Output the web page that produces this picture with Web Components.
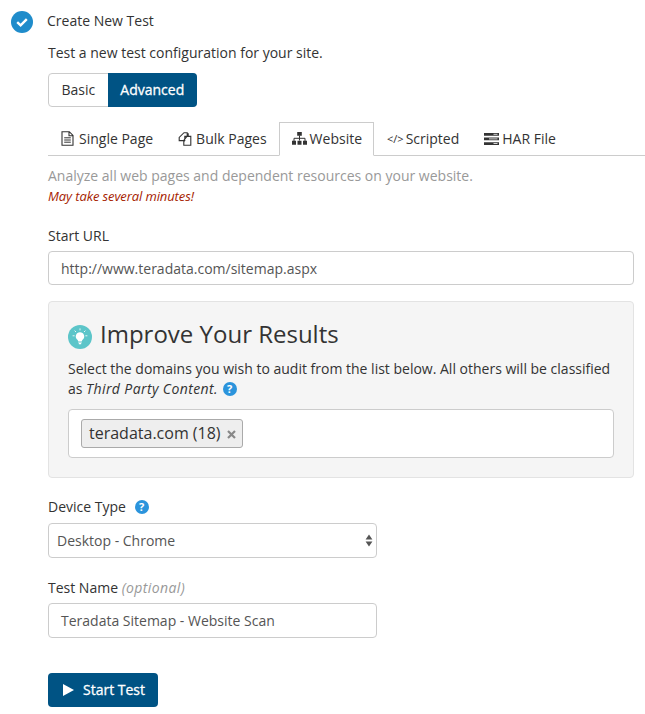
<!DOCTYPE html>
<html>
<head>
<meta charset="utf-8">
<title>Create New Test</title>
<style>
html, body { margin: 0; padding: 0; background: #fff; }
body { font-family: "Open Sans", sans-serif; font-size: 14px; color: #333; }
</style>
</head>
<body>
<test-form></test-form>

<script>
const ICONS = {
    check: '<svg width="22" height="22" viewBox="0 0 22 22"><circle cx="11" cy="11" r="11" fill="#1f8ccb"/><path d="M6.2 11.2l3.4 3.2 6.200-6.200" fill="none" stroke="#fff" stroke-width="2.400"/></svg>',
    page: '<svg width="13" height="15" viewBox="0 0 13 15"><path d="M1 .7h7.300L12 4.400v9.900H1z M8 .7v4h4" fill="none" stroke="#333" stroke-width="1.100"/><path d="M3.200 6.800h6.600M3.200 9h6.600M3.200 11.200h6.600" stroke="#333" stroke-width="1"/></svg>',
    pages: '<svg width="15" height="14" viewBox="0 0 15 14"><path d="M6 .7h3.200v3.400L5.600 8.600H1.200V5.400z M6.800 4.400v4.200l-1 1v3.700h7V4.400z M10.200 4.400V1.200" fill="none" stroke="#333" stroke-width="1.100"/></svg>',
    sitemap: '<svg width="15" height="13" viewBox="0 0 15 13"><path d="M5.200 0h4.600v3.800H5.200zM0 8.800h4v4H0zM5.500 8.800h4v4h-4zM11 8.800h4v4h-4z" fill="#333"/><path d="M7.500 3.500v5M2 9V6.300h11V9" fill="none" stroke="#333" stroke-width="1"/></svg>',
    har: '<svg width="15" height="12" viewBox="0 0 15 12"><path d="M0 0h15v2.700H0zM0 4.600h15v2.700H0zM0 9.200h15v2.700H0z" fill="#333"/><path d="M9.500 1.300h4M5 5.900h8.500M9.500 10.500h4" stroke="#fff" stroke-width=".8"/></svg>',
    bulb: '<svg width="24" height="24" viewBox="0 0 24 24"><circle cx="12" cy="12" r="12" fill="#5cc5c9"/><path d="M12 7.200a4.200 4.200 0 0 0-2.600 7.500c.5.400.7.900.7 1.400h3.800c0-.5.200-1 .7-1.400A4.200 4.200 0 0 0 12 7.200z" fill="#fff"/><path d="M10.200 17h3.600M10.800 18.600h2.400" stroke="#fff" stroke-width="1.100"/><path d="M12 3.400v2M6.600 5.600L8 7M17.400 5.600L16 7M4.600 10.800h2M17.400 10.800h2" stroke="#fff" stroke-width="1" opacity=".85"/></svg>',
    play: '<svg width="11" height="12" viewBox="0 0 11 12"><path d="M0 0l11 6-11 6z" fill="#fff"/></svg>'
};

class StepHeader extends HTMLElement {
    constructor() {
        super();
        this.attachShadow({ mode: 'open' });
        this.shadowRoot.innerHTML = `
            <style>
                :host { display: flex; align-items: center; gap: 14px; height: 22px; }
                .icon { display: block; width: 22px; height: 22px; }
                span { line-height: 22px; position: relative; top: -1px; }
            </style>
            <div class="icon">${ICONS.check}</div>
            <span><slot></slot></span>
        `;
    }
}

class ModeToggle extends HTMLElement {
    constructor() {
        super();
        this.attachShadow({ mode: 'open' });
        this.shadowRoot.innerHTML = `
            <style>
                :host { display: inline-flex; width: 149px; height: 34px; box-sizing: border-box; border: 1px solid #ccc; border-radius: 4px; }
                div { display: flex; align-items: center; justify-content: center; box-sizing: border-box; line-height: 20px; }
                .basic { width: 59px; color: #333; }
                .advanced { width: 90px; margin: -1px -1px -1px 0; background: #005384; color: #fff; border-radius: 0 4px 4px 0; -webkit-text-stroke: .3px #fff; }
            </style>
            <div class="basic">Basic</div>
            <div class="advanced">Advanced</div>
        `;
    }
}

class TabBar extends HTMLElement {
    constructor() {
        super();
        this.attachShadow({ mode: 'open' });
        this.shadowRoot.innerHTML = `
            <style>
                :host { display: flex; height: 34px; box-sizing: border-box; border-bottom: 1px solid #ccc; }
            </style>
            <slot></slot>
        `;
    }
}

class TabItem extends HTMLElement {
    constructor() {
        super();
        this.attachShadow({ mode: 'open' });
        this.shadowRoot.innerHTML = `
            <style>
                :host { display: flex; align-items: center; gap: var(--gap, 3px); box-sizing: border-box; height: 34px; padding: 0 11px 2px 12px; border: 1px solid transparent; border-bottom: 0; color: #333; white-space: nowrap; }
                :host([active]) { background: #fff; border-color: #ccc; border-bottom: 1px solid #fff; }
                ::slotted(svg) { display: block; flex: none; }
            </style>
            <slot name="icon"></slot><slot></slot>
        `;
    }
}

class HelpIcon extends HTMLElement {
    constructor() {
        super();
        this.attachShadow({ mode: 'open' });
        this.shadowRoot.innerHTML = `
            <style>
                :host { display: inline-flex; width: 14px; height: 14px; border-radius: 50%; background: #2b94dc; color: #fff; align-items: center; justify-content: center; font: 700 11px/14px "Open Sans", sans-serif; font-style: normal; vertical-align: 1px; }
            </style>
            ?
        `;
    }
}

class FieldLabel extends HTMLElement {
    constructor() {
        super();
        this.attachShadow({ mode: 'open' });
        this.shadowRoot.innerHTML = `
            <style>
                :host { display: block; line-height: 20px; color: #333; }
            </style>
            <slot></slot>
        `;
    }
}

class TextBox extends HTMLElement {
    constructor() {
        super();
        this.attachShadow({ mode: 'open' });
        this.shadowRoot.innerHTML = `
            <style>
                :host { display: flex; align-items: center; box-sizing: border-box; height: var(--box-height, 34px); padding: 0 12px; background: #fff; border: 1px solid #ccc; border-radius: 4px; color: #555; white-space: nowrap; }
            </style>
            <slot></slot>
        `;
    }
}

class SelectBox extends HTMLElement {
    constructor() {
        super();
        this.attachShadow({ mode: 'open' });
        this.shadowRoot.innerHTML = `
            <style>
                :host { display: flex; align-items: center; justify-content: space-between; box-sizing: border-box; height: 35px; padding: 0 3px 0 8px; background: #fff; border: 1px solid #ccc; border-radius: 4px; color: #555; }
                svg { display: block; }
            </style>
            <slot></slot>
            <svg width="8" height="13" viewBox="0 0 8 13"><path d="M4 .5l3.400 5H.6zM4 12.500l-3.400-5h6.800z" fill="#555"/></svg>
        `;
    }
}

class DomainTag extends HTMLElement {
    constructor() {
        super();
        this.attachShadow({ mode: 'open' });
        this.shadowRoot.innerHTML = `
            <style>
                :host { display: inline-flex; align-items: center; gap: 6px; box-sizing: border-box; height: 29px; padding: 0 6px 2px 7px; background: #eee; border: 1px solid #aaa; border-radius: 3px; font-size: 16px; color: #333; white-space: nowrap; }
                svg { display: block; margin-top: 4px; }
            </style>
            <slot></slot>
            <svg width="9" height="9" viewBox="0 0 9 9"><path d="M1 1l7 7M8 1L1 8" stroke="#888" stroke-width="2.200"/></svg>
        `;
    }
}

class TagInput extends HTMLElement {
    constructor() {
        super();
        this.attachShadow({ mode: 'open' });
        this.shadowRoot.innerHTML = `
            <style>
                :host { display: flex; align-items: center; box-sizing: border-box; height: 49px; padding: 0 12px; background: #fff; border: 1px solid #ccc; border-radius: 4px; }
            </style>
            <slot></slot>
        `;
    }
}

class ImprovePanel extends HTMLElement {
    constructor() {
        super();
        this.attachShadow({ mode: 'open' });
        this.shadowRoot.innerHTML = `
            <style>
                :host { display: block; box-sizing: border-box; height: 177px; padding: 19px 19px 0; background: #f5f5f5; border: 1px solid #e3e3e3; border-radius: 4px; }
                h3 { display: flex; align-items: center; gap: 8px; margin: 0 0 10px; height: 28px; font-size: 24px; font-weight: 400; line-height: 28px; color: #333; }
                h3 svg { display: block; margin-top: 4px; }
                h3 span { padding-bottom: 2px; }
                p { margin: 0 0 10px; line-height: 20px; color: #333; }
            </style>
            <h3>${ICONS.bulb}<span>Improve Your Results</span></h3>
            <p><slot name="text"></slot></p>
            <slot></slot>
        `;
    }
}

class StartButton extends HTMLElement {
    constructor() {
        super();
        this.attachShadow({ mode: 'open' });
        this.shadowRoot.innerHTML = `
            <style>
                :host { display: inline-flex; align-items: center; gap: 9px; box-sizing: border-box; height: 34px; width: 110px; padding: 0 0 2px 15px; background: #005384; color: #fff; border-radius: 4px; -webkit-text-stroke: .3px #fff; }
                svg { display: block; margin-top: 2px; }
            </style>
            ${ICONS.play}<slot></slot>
        `;
    }
}

class TestForm extends HTMLElement {
    constructor() {
        super();
        this.attachShadow({ mode: 'open' });
        this.shadowRoot.innerHTML = `
            <style>
                :host { display: block; padding: 11px 0 7px 11px; height: 714px; box-sizing: border-box; overflow: hidden; }
                .body { display: flex; flex-direction: column; margin-left: 37px; }
                .lede { margin-top: 10px; line-height: 20px; }
                mode-toggle { align-self: flex-start; margin-top: 10px; }
                tab-bar { margin-top: 15px; }
                .glyph { font-size: 11px; margin-right: -1px; }
                .desc { margin-top: 10px; line-height: 20px; color: #999; }
                .warn { margin-top: 2px; font-size: 13px; letter-spacing: -.1px; font-style: italic; line-height: 17px; color: #a61c00; }
                .start { margin-top: 21px; }
                .start text-box { margin: 5px 11px 0 0; }
                improve-panel { margin: 16px 11px 0 0; }
                improve-panel em { letter-spacing: .4px; }
                improve-panel help-icon { margin-left: 1px; }
                .device { margin-top: 19px; width: 329px; }
                .device field-label help-icon { margin-left: 5px; }
                .device select-box { margin-top: 6px; }
                .name { margin-top: 20px; width: 329px; }
                .name field-label em { color: #999; letter-spacing: .4px; }
                .name text-box { margin-top: 5px; --box-height: 35px; }
                start-button { margin-top: 35px; align-self: flex-start; }
                svg { display: block; }
            </style>
            <step-header>Create New Test</step-header>
            <div class="body">
                <div class="lede">Test a new test configuration for your site.</div>
                <mode-toggle></mode-toggle>
                <tab-bar>
                    <tab-item style="--gap:5px">${ICONS.page.replace('<svg', '<svg slot="icon"')}Single Page</tab-item>
                    <tab-item>${ICONS.pages.replace('<svg', '<svg slot="icon"')}Bulk Pages</tab-item>
                    <tab-item active>${ICONS.sitemap.replace('<svg', '<svg slot="icon"')}Website</tab-item>
                    <tab-item><span class="glyph" slot="icon">&lt;/&gt;</span>Scripted</tab-item>
                    <tab-item>${ICONS.har.replace('<svg', '<svg slot="icon"')}HAR File</tab-item>
                </tab-bar>
                <div class="desc">Analyze all web pages and dependent resources on your website.</div>
                <div class="warn">May take several minutes!</div>
                <div class="start">
                    <field-label>Start URL</field-label>
                    <text-box>http://www.teradata.com/sitemap.aspx</text-box>
                </div>
                <improve-panel>
                    <span slot="text">Select the domains you wish to audit from the list below. All others will be classified<br>as <em>Third Party Content.</em> <help-icon></help-icon></span>
                    <tag-input><domain-tag>teradata.com (18)</domain-tag></tag-input>
                </improve-panel>
                <div class="device">
                    <field-label>Device Type <help-icon></help-icon></field-label>
                    <select-box>Desktop - Chrome</select-box>
                </div>
                <div class="name">
                    <field-label>Test Name <em>(optional)</em></field-label>
                    <text-box>Teradata Sitemap - Website Scan</text-box>
                </div>
                <start-button>Start Test</start-button>
            </div>
        `;
    }
}

customElements.define('step-header', StepHeader);
customElements.define('mode-toggle', ModeToggle);
customElements.define('tab-bar', TabBar);
customElements.define('tab-item', TabItem);
customElements.define('help-icon', HelpIcon);
customElements.define('field-label', FieldLabel);
customElements.define('text-box', TextBox);
customElements.define('select-box', SelectBox);
customElements.define('domain-tag', DomainTag);
customElements.define('tag-input', TagInput);
customElements.define('improve-panel', ImprovePanel);
customElements.define('start-button', StartButton);
customElements.define('test-form', TestForm);
</script>
</body>
</html>
